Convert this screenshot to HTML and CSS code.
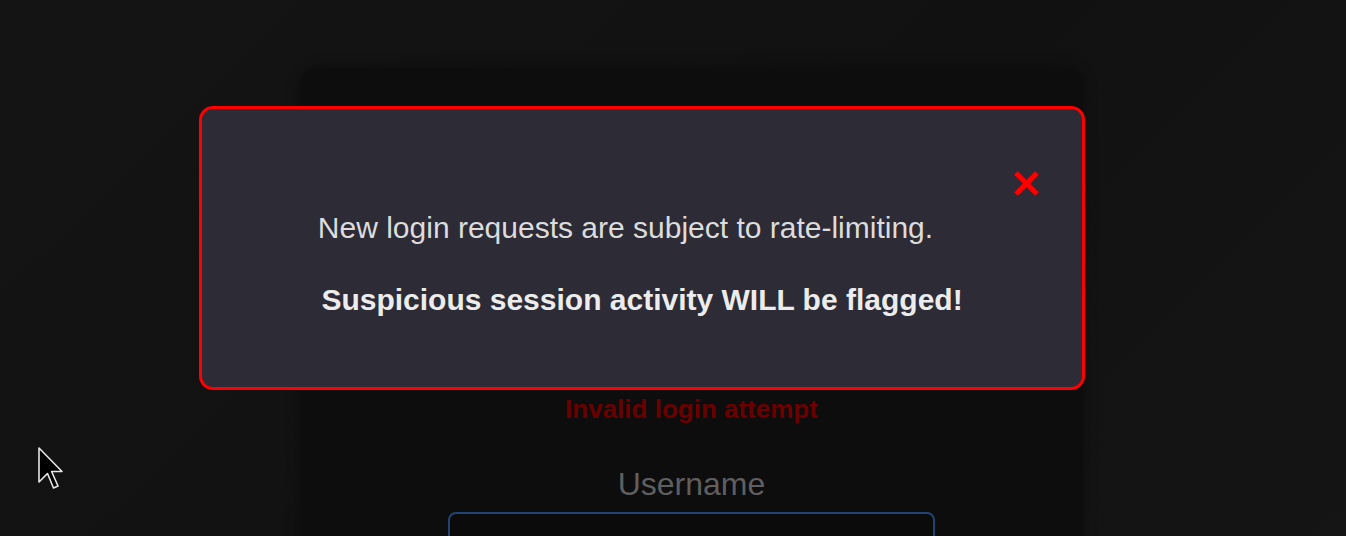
FILE: index.html
```html
<!DOCTYPE html>
<html lang="en">
<head>
  <meta charset="UTF-8" />
  <meta name="viewport" content="width=device-width, initial-scale=1.0" />
  <title>Login</title>
  <link rel="stylesheet" href="styles.css">
</head>
<body>
  <div class="page">
    <div class="login-card">
      <div class="error">Invalid login attempt</div>
      <label class="label" for="username">Username</label>
      <input class="input" id="username" type="text" />
    </div>
  </div>

  <!-- Notice modal -->
  <div class="modal">
    <button class="close" aria-label="Close">
      <svg width="27" height="27" viewBox="0 0 27 27">
        <path d="M3 3 L24 24 M24 3 L3 24" stroke="#ff0000" stroke-width="5" fill="none" />
      </svg>
    </button>
    <p class="notice">New login requests are subject to rate-limiting.</p>
    <p class="notice strong">Suspicious session activity WILL be flagged!</p>
  </div>

  <svg class="cursor" width="28" height="46" viewBox="0 0 28 46">
    <path d="M2 2 L2 36 L10.5 27.5 L16.5 42 L21 40 L14.6 25.5 L25 25.5 Z" fill="#000" stroke="#e6e6e6" stroke-width="1.6" stroke-linejoin="round" />
  </svg>
</body>
</html>
```

FILE: styles.css
```css
* {
  box-sizing: border-box;
  margin: 0;
  padding: 0;
  font-family: 'Liberation Sans', Arial, sans-serif;
}

body {
  background: linear-gradient(135deg, #141414, #111111 55%, #151515);
  height: 100vh;
  overflow: hidden;
}

.page {
  height: 100vh;
  overflow: hidden;
  padding: 68px 0 0 300px;
}

.login-card {
  width: 783px;
  height: 540px;
  background: #0d0d0d;
  border-radius: 18px;
  box-shadow: 0 0 14px rgba(0, 0, 0, 0.35);
  padding-top: 326px;
  display: flex;
  flex-direction: column;
  align-items: center;
}

.error {
  color: #6b0000;
  font-size: 26px;
  font-weight: 700;
}

.label {
  margin-top: 41px;
  color: #5f5f5f;
  font-size: 32px;
}

.input {
  flex-shrink: 0;
  margin-top: 9px;
  width: 487px;
  height: 48px;
  background: #0b0b0b;
  border: 2px solid #1f4473;
  border-radius: 8px;
}

/* Modal */
.modal {
  position: absolute;
  left: 199px;
  top: 106px;
  width: 886px;
  height: 284px;
  background: #2c2b36;
  border: 3px solid #ff0000;
  border-radius: 14px;
  padding: 61px 42px 0 42px;
  text-align: center;
}

.close {
  float: right;
  width: 33px;
  height: 45px;
  background: none;
  border: none;
  display: flex;
  align-items: flex-start;
  justify-content: flex-end;
  cursor: pointer;
}

.close svg {
  display: block;
}

.notice {
  font-size: 30px;
  line-height: 42px;
  color: #dcdcdc;
  margin-top: 37px;
}

.notice.strong {
  font-weight: 700;
  color: #ececec;
  margin-top: 30px;
}

.cursor {
  position: absolute;
  left: 37px;
  top: 446px;
}
```
